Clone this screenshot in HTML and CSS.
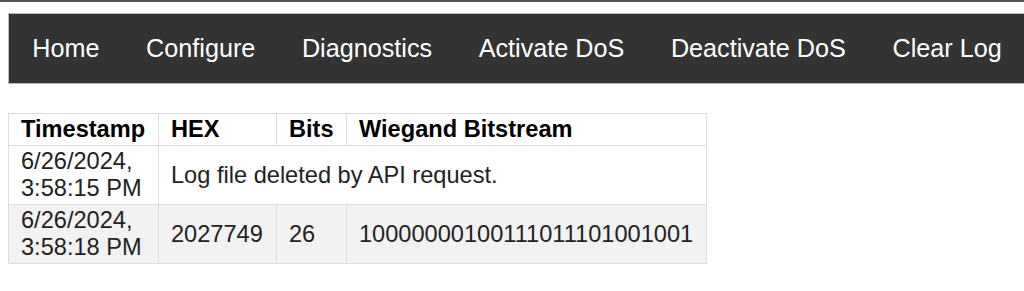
FILE: index.html
```html
<!DOCTYPE html>
<html>
<head>
  <meta charset="UTF-8">
  <title>Wiegand Log</title>
  <link rel="stylesheet" href="styles.css">
</head>
<body>
  <div class="topline"></div>
  <div class="page">
    <nav class="navbar">
      <a class="nav-link" href="#">Home</a>
      <a class="nav-link" href="#">Configure</a>
      <a class="nav-link" href="#">Diagnostics</a>
      <a class="nav-link" href="#">Activate DoS</a>
      <a class="nav-link" href="#">Deactivate DoS</a>
      <a class="nav-link" href="#">Clear Log</a>
    </nav>

    <table class="log-table">
      <colgroup>
        <col class="col-time">
        <col class="col-hex">
        <col class="col-bits">
        <col class="col-stream">
      </colgroup>
      <thead>
        <tr>
          <th>Timestamp</th>
          <th>HEX</th>
          <th>Bits</th>
          <th>Wiegand Bitstream</th>
        </tr>
      </thead>
      <tbody>
        <tr>
          <td>6/26/2024, 3:58:15 PM</td>
          <td colspan="3">Log file deleted by API request.</td>
        </tr>
        <tr>
          <td>6/26/2024, 3:58:18 PM</td>
          <td>2027749</td>
          <td>26</td>
          <td>10000000100111011101001001</td>
        </tr>
      </tbody>
    </table>
  </div>
</body>
</html>
```

FILE: styles.css
```css
html,body{overflow:hidden;}
body{margin:0;font-family:"Liberation Sans",Arial,sans-serif;background:white;color:#222;}

.topline{height:2px;background:#555;}

.page{padding:11px 0 0 8px;}

.navbar{
  display:flex;
  width:max-content;
  background:#333;
  border:1px solid #bbb;
  margin-bottom:29px;
}
.nav-link{
  display:block;
  padding:0 23.3px;
  line-height:69px;
  font-size:25.2px;
  color:white;
  text-decoration:none;
}

.log-table{
  border-collapse:collapse;
  table-layout:fixed;
  width:698px;
  font-size:23.6px;
}
.col-time{width:150px;}
.col-hex{width:118px;}
.col-bits{width:70px;}
.col-stream{width:360px;}

.log-table th,.log-table td{
  border:1px solid #ddd;
  padding:2px 11px 2px 12px;
  text-align:left;
  vertical-align:middle;
}
.log-table th{color:#000;font-weight:bold;}
.log-table tbody tr:nth-child(even){background:#f2f2f2;}
```
